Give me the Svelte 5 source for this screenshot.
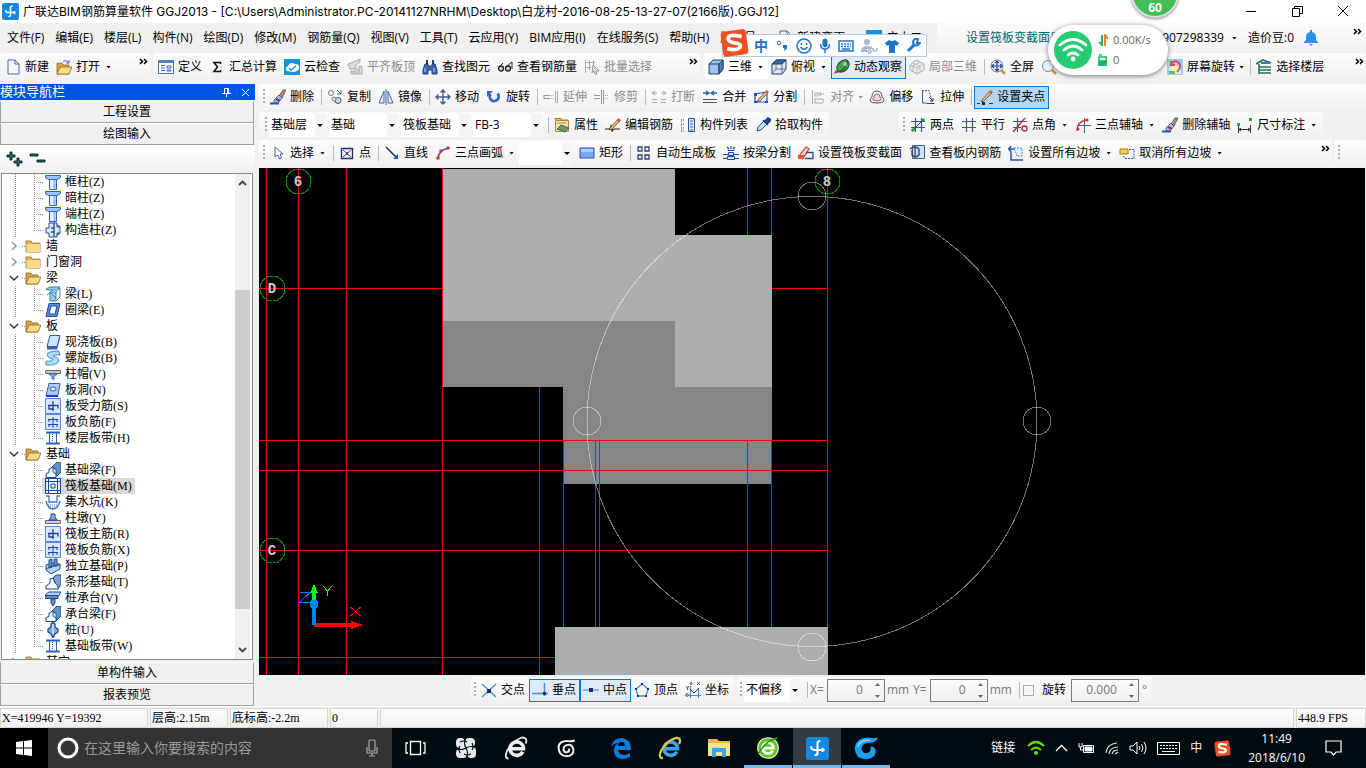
<script lang="ts">
  interface Tool {
    icon?: string
    label?: string
    caret?: boolean
    tight?: boolean
    on?: boolean
    strong?: boolean
    off?: boolean
    plain?: boolean
    sep?: boolean
  }

  interface Node {
    label: string
    icon?: string
    level: number
    open?: boolean
    last?: boolean
    selected?: boolean
  }

  const sep: Tool = { sep: true }

  const pillar = '<path d="M.5 1.500h15v2l-3 2h-9l-3-2z" fill="#9dc3f5" stroke="#2a5fc4"/><path d="M4.500 5.500h7v10h-7z" fill="#e6f0fe" stroke="#2a5fc4"/><path d="M9.500 6v9" stroke="#8fb4ee" stroke-width="2"/>'
  const bars = '<path d="M.5.500h15v15H.5z" fill="#d8e6fb" stroke="#5585dc"/>'
  const beam = '<path d="M6 6l6-6h4v10l-5 5V7z" fill="#5f93c4" stroke="#1c4c8c"/><path d="M1 15.500v-4l3-1V7l4-2v5l3 2v3.500z" fill="#f5faff" stroke="#1c4c8c"/>'
  const strip = '<path d="M1 2.500h14M1 13.500h14" stroke="#2a5fc4" stroke-width="2"/><path d="M4.500 3v10M11.500 3v10" stroke="#2a5fc4"/><path d="M7.500 4v8" stroke="#2a5fc4" stroke-dasharray="1 1"/>'
  const pencil = '<path d="M5 11l8-9 2 2-8 8-3 1z" fill="#e8b973" stroke="#5a4a3a" stroke-width=".8"/><path d="M12 3l1.500-2 2.500 2-2 2z" fill="#d85a4a"/>'
  const brush = '<path d="M9 7l4-6h3l-4 8z" fill="#d9823c" stroke="#2c4f86" stroke-width=".8"/><path d="M4 11l5-5 3 3-4 5H4z" fill="#9ebdf0" stroke="#2c4f86" stroke-width=".8"/><path d="M6 10l4 2" stroke="#b0243a" stroke-width="2"/><path d="M0 14.500h9" stroke="#2456b0" stroke-width="2"/>'
  const cube = '<path d="M1 5l4-4h10v9l-4 5H1z" fill="#9cc4ee" stroke="#223c5c"/><path d="M1 5h10v10M11 5l4-4" fill="none" stroke="#223c5c"/><path d="M11 5l4-4v9l-4 5z" fill="#4f7db0" stroke="#223c5c"/>'
  const folder = '<path d="M1 3h5l1 2h8v9H1z" fill="#e9b949" stroke="#8a6a2a" stroke-width=".8"/><path d="M1.500 6h13.500v8H1.500z" fill="#fbdc85"/>'
  const folderOpen = '<path d="M1 3h5l1 2h6v9H1z" fill="#d9a93d" stroke="#8a6a2a" stroke-width=".8"/><path d="M4 7h12l-3 7H1z" fill="#fbdc85" stroke="#8a6a2a" stroke-width=".8"/>'
  const axes = '<path d="M5.500 1v14M11.500 1v14M1 4.500h14M1 10.500h14" stroke="#3d5a96" stroke-width="1.200"/>'

  const icons: Record<string, string> = {
    newFile: '<path d="M3 1h7l4 4v10H3z" fill="#f4f8fd" stroke="#456a9c"/><path d="M10 1v4h4" fill="none" stroke="#456a9c"/>',
    open: '<path d="M1 4h5l1 2h6v9H1z" fill="#dba638" stroke="#8a6a2a" stroke-width=".8"/><path d="M4 8h12l-3 7H1z" fill="#fbdc85" stroke="#8a6a2a" stroke-width=".8"/><path d="M7 3q4-3 6 1m0-3v3h-3" fill="none" stroke="#3b6cb5"/>',
    define: '<path d="M.5 1.500h15v13H.5z" fill="#f8fbff" stroke="#3f6fae"/><path d="M.5 2.500h15" stroke="#4c83cc" stroke-width="3"/><path d="M3 6.500h4M3 9h4M3 11.500h4M9 7h4v2H9zM9 11h4v1H9z" stroke="#3f6fae"/>',
    sigma: '<path d="M11.500 5V3.500H5L8.500 8 5 12.500h6.500V11" fill="none" stroke="#111" stroke-width="1.600"/>',
    cloud: '<path d="M0 0h16v16H0z" fill="#1296db"/><path d="M3 12q-3-3 1-5 2-5 7-2 5 0 4 5-2 3-5 3z" fill="#fff"/><path d="M5 9l2 2 5-4" stroke="#1296db" stroke-width="1.500" fill="none"/>',
    align: '<path d="M1 5l8-3 4-2v3l-4 3v3l-6 1zM4 12h3v3H4zM8 10h3v5H8zM12 7h3v8h-3z" fill="#ddd" stroke="#aaa"/>',
    find: '<path d="M3 5h3v2h4V5h3l2 6v4h-5v-4H6v4H1v-4z" fill="#3c67ae" stroke="#1d3d78"/><path d="M4 1h2v4H4zM10 1h2v4h-2z" fill="#1d3d78"/><path d="M3 9v4M12 9v4" stroke="#bcd3f5"/>',
    glasses: '<path d="M3 7l3-3M10 7l5-4v7" fill="none" stroke="#222"/><circle cx="4" cy="9.500" r="2.500" fill="#c9d4e2" stroke="#222" stroke-width="1.300"/><circle cx="11" cy="9.500" r="2.500" fill="#c9d4e2" stroke="#222" stroke-width="1.300"/>',
    batch: '<path d="M1.500 1v13M1 3.500h10M5.500 1v10M9.500 1v8M1 8.500h6" fill="none" stroke="#aaa"/><path d="M9 6l6 6h-3l1 3h-2l-1-3-2 2z" fill="#ddd" stroke="#999"/>',
    cube,
    topView: '<path d="M1 5l4-4h10v9l-4 5H1z" fill="#dcecfb" stroke="#223c5c"/><path d="M5 1h10l-4 4H1z" fill="#2f6fae" stroke="#223c5c"/><path d="M11 5v10M5 1v9l-4 5M5 10h10" fill="none" stroke="#557" stroke-width=".8"/>',
    orbit: '<ellipse cx="9" cy="7" rx="5" ry="7" transform="rotate(45 9 7)" fill="#43a845" stroke="#39454a" stroke-width="1.200"/><path d="M1 13q9 1 13-11" fill="none" stroke="#39454a" stroke-width="1.300"/><circle cx="11" cy="5" r="2" fill="#8fe08a"/><path d="M0 15l5-2-3-2z" fill="#c0392b"/>',
    partial: '<path d="M1 6l6-5 8 4v6l-7 4-7-4z" fill="#eee" stroke="#aaa"/><path d="M1 6l7 3 7-4M8 9v6M4 4l7 3v6M11 3L4 7v6" fill="none" stroke="#bbb"/>',
    fit: '<circle cx="7" cy="7" r="6" fill="#eaf3fd" stroke="#6b7785"/><path d="M7 2v10M2 7h10M5 4l2-2 2 2M5 10l2 2 2-2M4 5L2 7l2 2M10 5l2 2-2 2" fill="none" stroke="#234b8f" stroke-width="1.200"/><path d="M11 11l4 4" stroke="#c99240" stroke-width="2.500"/>',
    zoom: '<circle cx="7" cy="7" r="5.500" fill="#eaf3fd" stroke="#7c8896"/><path d="M11 11l4 4" stroke="#c99240" stroke-width="2.500"/>',
    rotateScreen: '<path d="M0 0h16v16H0z" fill="#8fd0f5"/><path d="M2 9l6-4 6 5v5H2z" fill="#f5f0c4"/><path d="M4 5q4-5 8-1 3 4-2 9M4 2v4h4" fill="none" stroke="#e2444a" stroke-width="1.800"/><path d="M2 12h6v3H2z" fill="#7cb83f"/>',
    floors: '<path d="M0 5l7-4 8 3M3 8h12M3 11h12M3 14h12M3 5v10" fill="none" stroke="#2b6f5a" stroke-width="1.600"/><path d="M5 4h9" stroke="#3c78c4" stroke-width="2"/>',
    brush,
    copy: '<circle cx="4" cy="4" r="2.500" fill="#f4f8ff" stroke="#69788f"/><circle cx="11" cy="11.500" r="3" fill="#cde" stroke="#3d567e"/><circle cx="7" cy="10" r="2" fill="#eef" stroke="#69788f"/><path d="M10 1l4 4M14 1v4h-4" fill="none" stroke="#3c5f9c"/>',
    mirror: '<path d="M6 2v12H1zM10 2v12h5z" fill="#e6eefb" stroke="#3a66b0"/><path d="M8 0v16" stroke="#3a66b0"/>',
    move: '<path d="M8 1v14M1 8h14M5.500 3.500L8 1l2.500 2.500M5.500 12.500L8 15l2.500-2.500M3.500 5.500L1 8l2.500 2.500M12.500 5.500L15 8l-2.500 2.500" fill="none" stroke="#3e5f8a" stroke-width="1.400"/>',
    rotate: '<path d="M4.500 5a4.500 4.500 0 1 0 7-.500" fill="none" stroke="#3465c4" stroke-width="2.800"/><path d="M7 2H1v6z" fill="#3465c4"/>',
    extend: '<path d="M1 6.500h6M1 9.500h6M1 6v4" stroke="#999"/><path d="M8 6.500h3M8 9.500h3" stroke="#aaa" stroke-dasharray="1 1"/><path d="M12.500 2v12M14.500 2v12" stroke="#aaa"/>',
    trim: '<path d="M0 6.500h6M0 9.500h6M7.500 1v14M9.500 1v14" stroke="#999"/><path d="M11 6.500h4M11 9.500h4" stroke="#aaa" stroke-dasharray="1 1"/>',
    breakLine: '<path d="M1 4h5M4 2l-3 2 3 2M10 4h5M12 2l3 2-3 2M1 10.500h5M10 10.500h5M1 13.500h5M10 13.500h5" fill="none" stroke="#aaa"/>',
    merge: '<path d="M1 4h5M4 2l3 2-3 2M10 4h5M12 2L9 4l3 2" fill="none" stroke="#2c5daf" stroke-width="1.300"/><path d="M1 10.500h14M1 13.500h14" stroke="#555"/>',
    split: '<path d="M2 13V5l12-2v10z" fill="none" stroke="#2450c8" stroke-width="1.200"/>' + pencil + '<path d="M1 4h3v3H1zM1 12h3v2H1zM12 12h3v2h-3z" fill="#2450c8"/>',
    alignTo: '<path d="M2.500 1v14M5 4h3v3H5zM5 10h8v4H5z" fill="none" stroke="#aaa"/><path d="M14 5H9l2-2M9 5l2 2" fill="none" stroke="#aaa"/>',
    offset: '<path d="M1 12q0-3 2-4 0-6 5-6t5 6q2 1 2 4-1 2-7 2t-7-2z" fill="#eef2f9" stroke="#3a5585"/><path d="M4 11q0-2 1-3 0-3 3-3t3 3q1 1 1 3-4 2-8 0z" fill="#f5d8d8" stroke="#c85050"/>',
    stretch: '<path d="M2.500 1v13h4" fill="none" stroke="#3c62a8"/><path d="M2 1.500h7l3 12" fill="none" stroke="#3c62a8" stroke-dasharray="2 1"/><path d="M6.500 14.500h8M9 8l4 4v-3m0 3h-3" fill="none" stroke="#33415c"/>',
    grip: pencil + '<path d="M0 14.500h3M12 14.500h4" stroke="#333"/><path d="M5 13h3v3H5z" fill="#222"/>',
    props: '<path d="M1 3V1.500h6l1 1.500h6v2" fill="#f0c060" stroke="#a77c22"/><path d="M1.500 3.500h13v11h-13z" fill="#fbe3ac" stroke="#b8863a"/><path d="M3 12l4-4 8 3-4 4z" fill="#6f9a5c" stroke="#46617c"/><path d="M3 6h9" stroke="#c88a2c"/>',
    editBar: '<path d="M0 12h5l1-3 1 5 2-2h6" fill="none" stroke="#222" stroke-width="1.200"/>' + pencil,
    list: '<path d="M1 3h4M1 7h4M1 11h4M1 14h4" stroke="#445" stroke-dasharray="1 1"/><path d="M1.500 2v13" stroke="#688" stroke-dasharray="1 1"/><path d="M8.500 1.500h6v13h-6z" fill="#dce8fb" stroke="#2f4f8c"/><path d="M10 4h3M10 7h3M10 10h3M10 13h3" stroke="#2f6fd0"/>',
    picker: '<path d="M2 14l1-4 6-6 3 3-6 6z" fill="#bcdcf7" stroke="#28558f"/><path d="M8 3l5 5M10 4l3-3 3 2-4 4z" fill="#1d4f9c" stroke="#12386f" stroke-width="1.500"/>',
    twoPoint: axes + '<path d="M2 14L14 2" stroke="#2d2d2d"/><circle cx="3" cy="13" r="1.800" fill="#2f9a3b"/><circle cx="13" cy="3" r="1.800" fill="#2f9a3b"/>',
    parallel: axes,
    angle: '<path d="M5.500 1v14M1 4.500h14M1 10.500h8" stroke="#3d5a96" stroke-width="1.200"/><path d="M1 15L13 1" stroke="#c2202f" stroke-width="1.300"/><circle cx="12.500" cy="11.500" r="2.500" fill="#fff" stroke="#c2202f" stroke-width="1.300"/>',
    threeAxis: '<path d="M9.500 1v15M3 8.500h13" stroke="#3d5a96"/><path d="M2 14Q2 4 12 3" fill="none" stroke="#c2302f" stroke-width="1.300"/><circle cx="3" cy="12" r="1.500" fill="#c2302f"/><circle cx="12" cy="3" r="1.500" fill="#c2302f"/>',
    dims: '<path d="M1.500 8v8M13.500 8v8M2 12.500h11M4 11l-2 1.500L4 14M11 11l2 1.500L11 14" fill="none" stroke="#333"/><path d="M0 6h3v3H0zM12 1h3v3h-3z" fill="#2fa33b"/>',
    pointer: '<path d="M5 2v10l3-2 1.500 4 2-1L10 9h3z" fill="#fff" stroke="#4a6694"/>',
    point: '<path d="M2.500 3.500h11v10h-11z" fill="#f2f6ff" stroke="#222c6c" stroke-width="1.300"/><path d="M4 5l8 7M12 5l-8 7" stroke="#2450b8"/><path d="M7 7h2v3H7z" fill="#c02030"/>',
    line: '<path d="M2 2l11 11" stroke="#1d2b50" stroke-width="1.500"/><path d="M14 14H9l5-5z" fill="#1f4fc4"/>',
    arc: '<path d="M3 14Q3 5 14 3" fill="none" stroke="#2a4c9c" stroke-width="1.300"/><circle cx="3" cy="13" r="1.800" fill="#c8402f"/><circle cx="6" cy="6" r="1.800" fill="#c8402f"/><circle cx="13" cy="3" r="1.800" fill="#c8402f"/>',
    rect: '<path d="M1 3h14v10H1z" fill="#7ba8f0" stroke="#2c55b8"/><path d="M2 4h12v3H2z" fill="#b4cff8"/>',
    auto: '<path d="M2 2h4v4H2zM9 2h4v4H9zM2 10h4v4H2zM9 10h4v4H9z" fill="#f4f8ff" stroke="#2c3f6c" stroke-width="1.300"/>',
    byBeam: '<path d="M5.500 7.500h5v3h-5zM4.500 11.500h7v3h-7z" fill="#cfe0fb" stroke="#234a9c"/><path d="M0 9.500h5M11 9.500h5M0 13.500h4M12 13.500h4M8 1v3M4 2l2 2M12 2l-2 2M4.500 5.500h7" stroke="#234a9c" stroke-width="1.200"/>',
    section: '<path d="M1 11l7-9 3 2-5 8z" fill="#f8d0c4" stroke="#d23e2f" stroke-width="1.200"/><path d="M0 10h6v4H0z" fill="#e2583f"/><path d="M8 7.500h7v6H7" fill="none" stroke="#284d9c" stroke-width="1.300"/>',
    viewBar: '<path d="M3.500.500h12v13h-12z" fill="#cfe0f5" stroke="#3c5f9c"/><path d="M1 4q5-4 9 0v6q-4 4-7 0V5M6 2v10" fill="none" stroke="#33435c" stroke-width="1.300"/>',
    slope: '<path d="M0 4h6M3 1L1 4l2 3v8h12" fill="none" stroke="#2456b8" stroke-width="1.500"/><path d="M6 3h8v8H9z" fill="#e3edfb" stroke="#5f86cc" stroke-dasharray="2 1"/>',
    noSlope: '<path d="M1 4h8v5H1z" fill="#f2cf4f" stroke="#9a7a22"/><path d="M10 4.500h5v9H6l-2-3" fill="none" stroke="#2456b8" stroke-dasharray="2 1"/>',
    cross: '<path d="M1 2l14 13M15 2L1 15" stroke="#4c8bd0" stroke-width="1.300"/><path d="M6 7h4v4H6z" fill="#12326c"/>',
    perp: '<path d="M0 11.500h16M12.500 1v13" stroke="#4c8bd0" stroke-width="1.500"/><path d="M11 10h3v3h-3z" fill="#12326c"/>',
    mid: '<path d="M0 8h16" stroke="#6f9fd8" stroke-width="1.500"/><path d="M6 6h4v4H6z" fill="#12326c"/>',
    vertex: '<path d="M8 2l6 5-2 7H4L2 7z" fill="none" stroke="#4c8bd0" stroke-width="1.300"/><path d="M7 1h2v2H7zM1 6h2v2H1zM13 6h2v2h-2zM3 13h2v2H3zM11 13h2v2h-2z" fill="#12326c"/>',
    coord: '<path d="M5.500 4v12M3 13.500h13M13.500 6v10" stroke="#4c8bd0" stroke-width="1.200"/><path d="M5 7l4 4 5-5" fill="none" stroke="#12326c"/><path d="M1 4l1.500 2L4 4M2.500 6v2M12 0l3 3M15 0l-3 3" stroke="#333" stroke-width=".8"/><circle cx="6" cy="1.500" r="1" stroke="#333" stroke-width=".8"/><circle cx="2" cy="13" r="1.300" stroke="#333" stroke-width=".8"/>',
    pillar,
    tied: '<path d="M4 1h8v4h3v6h-3v4H4v-4H1V6h3z" fill="#dbe9fc" stroke="#2a4f94"/><path d="M9 1v14M6 6h3M6 10h3M12 3l3 2M12 13l3-2" stroke="#2a4f94" stroke-width="1.400"/>',
    beamL: '<path d="M1 3l4-2h10l-4 3H2zM5 6h6v9H5z" fill="#8fd0f2" stroke="#3d82b5"/><path d="M11 6l4-4v9l-4 4M5 6l6 6M2 9l6-5" fill="none" stroke="#3d82b5"/>',
    ring: '<path d="M4 1.500h11l-3 13H1z" fill="#5f8ee0" stroke="#1d459c"/><path d="M6 4h6l-2 8H4z" fill="#fff" stroke="#1d459c"/>',
    slab: '<path d="M5 1.500h10l-3 11H2z" fill="#cfe2fb" stroke="#2a5fc4"/><path d="M2 12.500h10l3-10v2l-3 11H2z" fill="#2a5fc4"/>',
    spiral: '<path d="M14 1Q2 1 2 5q1 3 6 4Q7 12 1 11v4q12 1 13-5-1-3-6-4 2-2 7-1z" fill="#a8dcf5" stroke="#3a94c4"/>',
    cap: '<path d="M.5 4.500h15v3H.5z" fill="#c8c8c8" stroke="#666"/><path d="M4 8h8l-3 2v3H7v-3z" fill="#9fc2f5" stroke="#2a5fc4"/>',
    hole: '<path d="M4 1.500h11l-2 12H1z" fill="#a9c8f7" stroke="#2a5fc4"/><ellipse cx="8" cy="7" rx="3" ry="2" fill="#e8f1fd" stroke="#2a5fc4"/><path d="M1 14h12" stroke="#1d459c" stroke-width="2"/>',
    mainBar: bars + '<path d="M3 7.500h10v3M8 3v10M4 7v4h5" fill="none" stroke="#1d459c" stroke-width="1.300"/>',
    negBar: bars + '<path d="M3 5.500h10M3 10.500h10M8 3v11M4 5v3M12 5v3M4 10v3M12 10v3" fill="none" stroke="#1d459c"/>',
    strip,
    beam,
    raft: '<path d="M.5.500h15v15H.5z" fill="#eaf1fc" stroke="#1d459c"/><path d="M3.500 1v14M12.500 1v14M1 3.500h14M1 12.500h14M6 6h4v4H6z" fill="none" stroke="#1d459c"/>',
    pit: '<path d="M1 2h3v6h8V2h3M1 7q2 8 7 8t7-8" fill="none" stroke="#3a78c4" stroke-width="1.300"/><path d="M3 11h10M5 13h6" stroke="#3a78c4" stroke-dasharray="1 1"/>',
    pier: '<path d="M.5 10.500h15v3H.5z" fill="#d2d2d2" stroke="#666"/><path d="M4 10l2-3V4h4v3l2 3z" fill="#7fa8ea" stroke="#1d459c"/>',
    isolated: '<path d="M1 7l5-2 9 1v5l-9 5-5-4z" fill="#b7d0ee" stroke="#1c4c8c"/><path d="M4 2l3-1v8l-3 1zM9 1h3v7H9zM1 11l6-3 8-1" fill="#5f93c4" stroke="#1c4c8c"/>',
    stripBase: '<path d="M8 4l3-3h5v9l-3 5z" fill="#78a6cf" stroke="#1c4c8c"/><path d="M1 15v-3l4-3V5l3-1 2 5 3 3v3z" fill="#f1f7fe" stroke="#1c4c8c"/>',
    pileCap: '<path d="M0 5l4-3h12l-3 5H0z" fill="#b7d0ee" stroke="#1c4c8c"/><path d="M0 5.500h13v3H0zM6 9h4v4l-2 3-2-3z" fill="#5f93c4" stroke="#1c4c8c"/>',
    pile: '<path d="M6 2l2-2 2 2v3l3 2v3l-3 2-2 4-2-4-3-2V7l3-2z" fill="#7fa8da" stroke="#1c4c8c" stroke-width="1.300"/><path d="M8 2v10" stroke="#fff"/>',
    folder,
    folderOpen,
    app: '<rect width="16" height="16" rx="2" fill="#1488e0"/><path d="M8 12V4.500Q8 2.500 10 3M3.500 6.500q0 2.500 2.500 2.500h7M11.500 7.500v3M8 11q0 2-2 1.500" fill="none" stroke="#fff" stroke-width="1.400"/>',
    sogou: '<rect x="1" y="1" width="14" height="14" rx="2" transform="rotate(-8 8 8)" fill="#f04e23"/><path d="M12 4.500Q4 2.500 4.500 6q.5 1.500 4 2t2.500 2.500Q9 12.500 4 11" fill="none" stroke="#fff" stroke-width="2"/>',
    ie: '<path d="M12.500 10.500A4.500 4.500 0 1 1 13 8.500H5" fill="none" stroke="currentColor" stroke-width="2.400"/><path d="M3 15Q0 15 2 10 6 3 12 1q4 0 2.500 4" fill="none" stroke="currentColor" stroke-width="1.200"/>',
    ieBall: '<circle cx="8" cy="8" r="7.500" fill="#5fc426" stroke="#e8f8de" stroke-width=".8"/><path d="M11.500 10A4 4 0 1 1 12 8H4.500" fill="none" stroke="#fff" stroke-width="2"/><path d="M1 12Q8 1 15 1" fill="none" stroke="#2d9a17" stroke-width="1.200"/>',
    swirl: '<path d="M15 2Q12 3 10 2.500 3 2 2 7q0 7 6 7.500 6 0 6-5Q13 5 9.500 5.500 6 6 6 9q0 2.500 2.500 2.500Q11 11 10.500 8.500" fill="none" stroke="currentColor" stroke-width="1.600"/>',
    gswirl: '<path d="M16 1q-3 1-6 0Q1 1 .5 8.500 1 15.500 8 15.500q6-.5 6.500-5Q14.500 7 11 7q1 4-3 4.500-3-.5-3-3.500 1-3.500 5-3.500Q15 4.500 16 1z" fill="#1ba2f5"/><path d="M2.500 7q2-5 8-4" stroke="#8fdcff" fill="none"/>'
  }

  const menus = ['文件(F)', '编辑(E)', '楼层(L)', '构件(N)', '绘图(D)', '修改(M)', '钢筋量(Q)', '视图(V)', '工具(T)', '云应用(Y)', 'BIM应用(I)', '在线服务(S)', '帮助(H)', '版本号']

  const fileTools: Tool[] = [
    { icon: 'newFile', label: '新建' },
    { icon: 'open', label: '打开', caret: true }
  ]
  const calcTools: Tool[] = [
    { icon: 'define', label: '定义' },
    { icon: 'sigma', label: '汇总计算' },
    { icon: 'cloud', label: '云检查' },
    { icon: 'align', label: '平齐板顶', off: true },
    { icon: 'find', label: '查找图元' },
    { icon: 'glasses', label: '查看钢筋量' },
    { icon: 'batch', label: '批量选择', off: true }
  ]
  const viewTools: Tool[] = [
    { icon: 'cube', label: '三维', caret: true, plain: true },
    { icon: 'topView', label: '俯视', caret: true },
    { icon: 'orbit', label: '动态观察', on: true },
    { icon: 'partial', label: '局部三维', off: true },
    sep,
    { icon: 'fit', label: '全屏' },
    { icon: 'zoom', label: '缩放', caret: true },
    { icon: 'move', label: '平移', caret: true },
    { icon: 'rotateScreen', label: '屏幕旋转', caret: true, tight: true },
    sep,
    { icon: 'floors', label: '选择楼层' }
  ]
  const editTools: Tool[] = [
    { icon: 'brush', label: '删除' },
    sep,
    { icon: 'copy', label: '复制' },
    { icon: 'mirror', label: '镜像' },
    sep,
    { icon: 'move', label: '移动' },
    { icon: 'rotate', label: '旋转' },
    sep,
    { icon: 'extend', label: '延伸', off: true },
    { icon: 'trim', label: '修剪', off: true },
    sep,
    { icon: 'breakLine', label: '打断', off: true },
    { icon: 'merge', label: '合并' },
    { icon: 'split', label: '分割' },
    sep,
    { icon: 'alignTo', label: '对齐', off: true, caret: true, tight: true },
    { icon: 'offset', label: '偏移' },
    { icon: 'stretch', label: '拉伸' },
    sep,
    { icon: 'grip', label: '设置夹点', on: true, strong: true }
  ]
  const partTools: Tool[] = [
    { icon: 'props', label: '属性' },
    { icon: 'editBar', label: '编辑钢筋' },
    { icon: 'list', label: '构件列表' },
    { icon: 'picker', label: '拾取构件' }
  ]
  const axisTools: Tool[] = [
    { icon: 'twoPoint', label: '两点' },
    { icon: 'parallel', label: '平行' },
    { icon: 'angle', label: '点角', caret: true },
    { icon: 'threeAxis', label: '三点辅轴', caret: true },
    { icon: 'brush', label: '删除辅轴' },
    { icon: 'dims', label: '尺寸标注', caret: true }
  ]
  const drawTools: Tool[] = [
    { icon: 'pointer', label: '选择', caret: true },
    sep,
    { icon: 'point', label: '点' },
    sep,
    { icon: 'line', label: '直线' },
    { icon: 'arc', label: '三点画弧', caret: true }
  ]
  const slabTools: Tool[] = [
    { icon: 'rect', label: '矩形' },
    sep,
    { icon: 'auto', label: '自动生成板' },
    { icon: 'byBeam', label: '按梁分割' },
    { icon: 'section', label: '设置筏板变截面' },
    { icon: 'viewBar', label: '查看板内钢筋' },
    { icon: 'slope', label: '设置所有边坡', caret: true },
    { icon: 'noSlope', label: '取消所有边坡', caret: true }
  ]
  const snapTools: Tool[] = [
    { icon: 'cross', label: '交点' },
    { icon: 'perp', label: '垂点', on: true },
    { icon: 'mid', label: '中点', on: true },
    { icon: 'vertex', label: '顶点' },
    { icon: 'coord', label: '坐标' }
  ]

  const tree: Node[] = [
    { label: '框柱(Z)', icon: 'pillar', level: 2 },
    { label: '暗柱(Z)', icon: 'pillar', level: 2 },
    { label: '端柱(Z)', icon: 'pillar', level: 2 },
    { label: '构造柱(Z)', icon: 'tied', level: 2, last: true },
    { label: '墙', level: 1 },
    { label: '门窗洞', level: 1 },
    { label: '梁', level: 1, open: true },
    { label: '梁(L)', icon: 'beamL', level: 2 },
    { label: '圈梁(E)', icon: 'ring', level: 2, last: true },
    { label: '板', level: 1, open: true },
    { label: '现浇板(B)', icon: 'slab', level: 2 },
    { label: '螺旋板(B)', icon: 'spiral', level: 2 },
    { label: '柱帽(V)', icon: 'cap', level: 2 },
    { label: '板洞(N)', icon: 'hole', level: 2 },
    { label: '板受力筋(S)', icon: 'mainBar', level: 2 },
    { label: '板负筋(F)', icon: 'negBar', level: 2 },
    { label: '楼层板带(H)', icon: 'strip', level: 2, last: true },
    { label: '基础', level: 1, open: true },
    { label: '基础梁(F)', icon: 'beam', level: 2 },
    { label: '筏板基础(M)', icon: 'raft', level: 2, selected: true },
    { label: '集水坑(K)', icon: 'pit', level: 2 },
    { label: '柱墩(Y)', icon: 'pier', level: 2 },
    { label: '筏板主筋(R)', icon: 'mainBar', level: 2 },
    { label: '筏板负筋(X)', icon: 'negBar', level: 2 },
    { label: '独立基础(P)', icon: 'isolated', level: 2 },
    { label: '条形基础(T)', icon: 'stripBase', level: 2 },
    { label: '桩承台(V)', icon: 'pileCap', level: 2 },
    { label: '承台梁(F)', icon: 'beam', level: 2 },
    { label: '桩(U)', icon: 'pile', level: 2 },
    { label: '基础板带(W)', icon: 'strip', level: 2, last: true },
    { label: '其它', level: 1 }
  ]

  // grid lines: [x, y1, y2] and [y, x1, x2]
  const vLines = [
    [266, 168, 675], [298, 168, 675], [346, 168, 675], [442, 168, 675], [539, 387, 675],
    [563, 440, 627], [595, 440, 627], [599, 440, 627], [747, 168, 235], [747, 440, 627],
    [771, 168, 235], [771, 440, 627], [827, 168, 627]
  ]
  const hLines = [
    [288, 259, 443], [288, 772, 828], [440, 259, 828], [470, 259, 828], [550, 259, 828], [657, 259, 555]
  ]
  const bubbles = [
    { x: 298, y: 181, t: '6' },
    { x: 827, y: 181, t: '8' },
    { x: 272, y: 288, t: 'D' },
    { x: 272, y: 550, t: 'C' }
  ]
  const handles = [[812, 196], [587, 421], [1037, 421], [812, 647]]
</script>

{#snippet icon(name: string, size = 16)}
  <svg class="icon" width={size} height={size} viewBox="0 0 16 16" fill="none" aria-hidden="true">{@html icons[name]}</svg>
{/snippet}

{#snippet toolList(items: Tool[])}
  {#each items as t}
    {#if t.sep}
      <i class="sep"></i>
    {:else}
      <button class="tool" class:on={t.on} class:strong={t.strong} class:plain={t.plain} disabled={t.off}>
        {@render icon(t.icon ?? '')}
        <span>{t.label}</span>
        {#if t.caret}<i class="caret" class:tight={t.tight}></i>{/if}
      </button>
    {/if}
  {/each}
{/snippet}

{#snippet more()}
  <svg class="more" width="9" height="7" viewBox="0 0 9 7" fill="none" stroke="#000" stroke-width="1.500"><path d="M1 1l2.500 2.500L1 6M5 1l2.500 2.500L5 6" /></svg>
{/snippet}

{#snippet combo(label: string, value: string, kind: string)}
  <span class="combo {kind}">
    <select aria-label={label}><option>{value}</option></select>
  </span>
{/snippet}

{#snippet spin(label: string, value: string, kind: string)}
  <span class="spin {kind}">
    <input type="text" aria-label={label} {value} />
    <svg width="5" height="15" viewBox="0 0 5 15" fill="#666"><path d="M0 3l2.500-3L5 3zM0 12l2.500 3L5 12z" /></svg>
  </span>
{/snippet}

<div class="window">
  <header class="title">
    {@render icon('app', 17)}
    <h1>广联达BIM钢筋算量软件 GGJ2013 - [C:\Users\Administrator.PC-20141127NRHM\Desktop\白龙村-2016-08-25-13-27-07(2166版).GGJ12]</h1>
    <div class="controls">
      <button aria-label="最小化"><svg width="11" height="11" stroke="#000"><path d="M0 5.500h10" /></svg></button>
      <button aria-label="还原"><svg width="11" height="11" stroke="#000" fill="none"><path d="M.5 2.500h7v8h-7zM2.500 2.500v-2h8v7h-3" /></svg></button>
      <button aria-label="关闭"><svg width="11" height="11" stroke="#000"><path d="M0 0l10 10M10 0L0 10" /></svg></button>
    </div>
  </header>

  <nav class="menubar">
    <div class="menus">
      {#each menus as m}<button>{m}</button>{/each}
      <button class="with-icon">{@render icon('newFile')} 新建变更</button>
      <button class="with-icon">{@render icon('cloud')} 广小二</button>
    </div>
    <div class="account group">
      <a href="#help">设置筏板变截面后</a>
      <button class="user">907298339<i class="caret"></i></button>
      <span>造价豆:0</span>
      <svg width="14" height="16" viewBox="0 0 14 16" fill="#2f8df0"><path d="M6 0h2v2q4 1 4 5v3l2 2v1H0v-1l2-2V7q0-4 4-5zM5 14h4l-2 2z" /></svg>
      {@render more()}
    </div>
  </nav>

  <div class="bar">
    <div class="group file">{@render toolList(fileTools)}{@render more()}</div>
    <div class="group calc">{@render toolList(calcTools)}{@render more()}</div>
    <div class="group grow">{@render toolList(viewTools)}{@render more()}</div>
  </div>

  <div class="body">
    <aside>
      <div class="dock-title">
        <h2>模块导航栏</h2>
        <button aria-label="固定"><svg width="9" height="9" stroke="#fff" fill="none"><path d="M2.500 5V.5h4V5M5.500 1v4M0 5.500h9M4.500 6v3" /></svg></button>
        <button aria-label="关闭"><svg width="9" height="9" stroke="#fff"><path d="M1 1l7 7M8 1L1 8" /></svg></button>
      </div>
      <button class="nav">工程设置</button>
      <button class="nav">绘图输入</button>
      <div class="expand">
        <button aria-label="全部展开"><svg width="17" height="16" fill="#0a8a80" stroke="#000" stroke-width=".8"><path d="M4 1h2v3h3v2H6v3H4V6H1V4h3zM11 7h2v3h3v2h-3v3h-2v-3H8v-2h3z" /></svg></button>
        <button aria-label="全部折叠"><svg width="17" height="16" fill="#0a8a80" stroke="#000" stroke-width=".8"><path d="M1 3h8v2H1zM8 9h8v2H8z" /></svg></button>
      </div>
      <div class="tree">
        <ul>
          {#each tree as n}
            <li class="level{n.level}" class:last={n.last}>
              {#if n.level === 1}
                <svg class="arrow" width="10" height="10" fill="none" stroke={n.open ? '#333' : '#999'} stroke-width="1.500"><path d={n.open ? 'M1 3l4 4 4-4' : 'M3 1l4 4-4 4'} /></svg>
                <i class="twig"></i>
                {@render icon(n.open ? 'folderOpen' : 'folder')}
              {/if}
              <span class="leaf" class:selected={n.selected}>
                {#if n.icon}{@render icon(n.icon)}{/if}
                <span>{n.label}</span>
              </span>
            </li>
          {/each}
        </ul>
        <div class="scroll">
          <svg width="9" height="6" fill="none" stroke="#444" stroke-width="1.800"><path d="M1 5l3.500-3.500L8 5" /></svg>
          <i class="above"></i>
          <i class="thumb"></i>
          <i class="below"></i>
          <svg width="9" height="6" fill="none" stroke="#444" stroke-width="1.800"><path d="M1 1l3.500 3.500L8 1" /></svg>
        </div>
      </div>
      <button class="nav">单构件输入</button>
      <button class="nav">报表预览</button>
    </aside>

    <main>
      <div class="row">
        <div class="group grow"><i class="handle"></i>{@render toolList(editTools)}</div>
      </div>
      <div class="row">
        <div class="group parts">
          <i class="handle"></i>
          {@render combo('楼层', '基础层', 'short')}
          {@render combo('构件类型', '基础', 'long')}
          {@render combo('构件', '筏板基础', 'long')}
          {@render combo('名称', 'FB-3', 'long')}
          <i class="sep"></i>
          {@render toolList(partTools)}
        </div>
        <div class="group axis"><i class="handle"></i>{@render toolList(axisTools)}</div>
      </div>
      <div class="row">
        <div class="group grow">
          <i class="handle"></i>
          {@render toolList(drawTools)}
          {@render combo('画法', '', 'tiny')}
          {@render toolList(slabTools)}
          {@render more()}
        </div>
        <div class="group tail"><i class="handle"></i></div>
      </div>

      <svg class="canvas" viewBox="259 168 1107 507" preserveAspectRatio="xMinYMin slice" shape-rendering="crispEdges">
        <path d="M443 169h232v66h97v152H443z" fill="#adadad" />
        <path d="M443 321h232v66h97v97H563v-97H443z" fill="#868686" />
        <path d="M555 627h273v50H555z" fill="#adadad" />
        {#each vLines as [x, y1, y2]}<rect {x} y={y1} width="1" height={y2 - y1} fill="#f00" />{/each}
        {#each hLines as [y, x1, x2]}<rect x={x1} {y} width={x2 - x1} height="1" fill="#f00" />{/each}
        {#each bubbles as b}
          <circle cx={b.x + 0.5} cy={b.y + 0.5} r="12.500" fill="none" stroke="#008a00" />
          <text x={b.x} y={b.y + 5} text-anchor="middle">{b.t}</text>
        {/each}
        <g fill="none" stroke="#fff" stroke-opacity=".45">
          <circle cx="812" cy="421.500" r="225" />
          {#each handles as [x, y]}<circle cx={x} cy={y} r="14" />{/each}
        </g>
        <path d="M314 623h37v-2l12 4-12 4v-2h-37z" fill="#f00" />
        <path d="M350.500 607l10 9M360.500 607l-10 9" stroke="#f00" />
        <path d="M314 584l4 9h-2v10h-4V593h-2z" fill="#0f0" />
        <path d="M323 586l4.500 5 4.500-5M327.500 591v5" stroke="#0f0" fill="none" />
        <path d="M312 604h4v21h-4z" fill="#0080ff" />
        <circle cx="314" cy="604" r="4.500" fill="#0080ff" />
        <path d="M300 592.500h10l-10 9.500h10" stroke="#0080ff" fill="none" />
      </svg>

      <div class="snap">
        <div class="group"><i class="handle"></i>{@render toolList(snapTools)}</div>
        <div class="group offset">
          <i class="handle"></i>
          {@render combo('偏移方式', '不偏移', 'short')}
          <i class="sep"></i>
          <span class="dim">X=</span>
          {@render spin('X', '0', 'narrow')}
          <span class="dim unit">mm</span>
          <span class="dim">Y=</span>
          {@render spin('Y', '0', 'narrow')}
          <span class="dim unit">mm</span>
          <i class="sep"></i>
          <label><input type="checkbox" />旋转</label>
          {@render spin('角度', '0.000', 'wide')}
          <span class="dim">°</span>
        </div>
      </div>
    </main>
  </div>

  <footer class="status">
    <span class="coords">X=419946 Y=19392</span>
    <span class="height">层高:2.15m</span>
    <span class="base">底标高:-2.2m</span>
    <span class="count">0</span>
    <span class="grow"></span>
    <span class="fps">448.9 FPS</span>
  </footer>

  <div class="taskbar">
    <button class="start" aria-label="开始"><svg width="16" height="16" fill="#fff"><path d="M0 2l7-1v6.500H0zM8 1l8-1v7.500H8zM0 8.500h7V15l-7-1zM8 8.500h8V16l-8-1z" /></svg></button>
    <div class="search">
      <svg width="22" height="22" fill="none" stroke="#fff" stroke-width="3"><circle cx="11" cy="11" r="9" /></svg>
      <input type="text" placeholder="在这里输入你要搜索的内容" aria-label="搜索" />
      <svg width="12" height="18" fill="none" stroke="#aaa" stroke-width="1.200"><rect x="3" y="1" width="6" height="11" rx="1" /><path d="M1 8v6h10V8M6 14v3M3 17h6" /></svg>
    </div>
    <div class="apps">
      <button aria-label="任务视图"><svg width="22" height="16" fill="none" stroke="#fff" stroke-width="1.300"><path d="M5.500 1.500h10v13h-10zM3 3H1v10h2M18 3h2v10h-2" /></svg></button>
      <button aria-label="风扇"><svg width="22" height="22" viewBox="0 0 22 22" fill="#e8e8e8"><rect x="1" y="1" width="9" height="10" rx="4" /><rect x="10" y="1" width="10" height="9" rx="4" /><rect x="12" y="10" width="9" height="11" rx="4" /><rect x="1" y="12" width="11" height="9" rx="4" /><circle cx="11" cy="11" r="6" /><path d="M11 11Q8 6 11 0M11 11q5-3 11 0M11 11q3 5 0 11M11 11q-5 3-11 0M5 5q4-2 7 0M17 6q2 4 0 7M16 17q-4 2-7 0M5 16q-2-4 0-7" fill="none" stroke="#010b10" stroke-width="1.200" /></svg></button>
      <button class="white" aria-label="浏览器">{@render icon('ie', 24)}</button>
      <button class="white" aria-label="广联达">{@render icon('swirl', 20)}</button>
    </div>
    <div class="apps pinned">
      <button aria-label="Edge"><svg width="20" height="21" viewBox="0 0 20 21" fill="#0f7bd8"><path d="M0 9Q2 0 11 0q9 1 9 12H7q1 5 6 5 3 0 6-2v4q-4 2-8 2-9-1-8-10 1-4 4-6-4 0-7 4zm7-1h7q0-4-3.500-4T7 8z" /></svg></button>
      <button class="sky" aria-label="IE">{@render icon('ie', 24)}<svg class="orbit" width="24" height="24" fill="none" stroke="#f6c12e" stroke-width="2"><path d="M5 22Q-1 22 4 13 10 4 18 2q6 0 3 6" /></svg></button>
      <button aria-label="文件资源管理器"><svg width="22" height="20" viewBox="0 0 22 20"><path d="M0 1h9l2 2h11v15H0z" fill="#e9b64a" /><path d="M0 5h22v13H0z" fill="#fde08d" /><path d="M4 10h14v9h-4v-5H8v5H4z" fill="#3ba7e8" /></svg></button>
      <button class="running" aria-label="安全浏览器">{@render icon('ieBall', 22)}</button>
      <button class="running active" aria-label="GGJ2013">{@render icon('app', 23)}</button>
      <button class="running" aria-label="广联达云">{@render icon('gswirl', 24)}</button>
    </div>
    <div class="tray">
      <span>链接</span>
      <svg width="18" height="16" viewBox="0 0 18 16" fill="none" stroke="#58d80c" stroke-width="2.200"><path d="M1 6q8-8 16 0M4 10q5-5 10 0" /><circle cx="9" cy="13" r="1" /></svg>
      <svg width="13" height="8" fill="none" stroke="#fff" stroke-width="1.300"><path d="M1 7l5.500-5.500L12 7" /></svg>
      <svg width="17" height="12" viewBox="0 0 17 12" fill="none" stroke="#fff"><path d="M5.500 3.500h10v7h-10zM1 1v4h3V1M2.500 5v3h3" /><path d="M7 5h7v4H7z" fill="#fff" /></svg>
      <svg width="14" height="14" viewBox="0 0 14 14" fill="none" stroke="#ddd" stroke-width="1.200"><path d="M1 12Q2 3 12 2M4 13q1-7 9-7M7 13q1-4 6-4M10 13l3-2" /></svg>
      <svg width="18" height="14" viewBox="0 0 18 14" fill="none" stroke="#fff"><path d="M1 5v4h3l4 4V1L4 5zM10 5q2 2 0 4M12.500 3q3 4 0 8M15 1q4 6 0 12" /></svg>
      <svg width="23" height="13" viewBox="0 0 23 13" fill="none" stroke="#fff"><path d="M.5.500h22v12H.5z" /><path d="M3 3.500h17M3 6.500h17" stroke-dasharray="2 1" /><path d="M5 9.500h13" /></svg>
      <span>中</span>
      {@render icon('sogou', 17)}
      <time><span>11:49</span><span>2018/6/10</span></time>
      <svg width="17" height="17" viewBox="0 0 17 17" fill="none" stroke="#fff" stroke-width="1.200"><path d="M1 1h15v11h-5l-2.500 3L6 12H1z" /></svg>
    </div>
  </div>

  <div class="ime">
    <svg class="logo" width="29" height="30" viewBox="0 0 16 16">{@html icons.sogou}</svg>
    <b>中</b>
    <svg width="14" height="14" fill="#1f73c8"><circle cx="4" cy="4" r="1.800" fill="none" stroke="#1f73c8" /><path d="M8 6h4q1 4-3 6 1-2 0-3H8z" /></svg>
    <svg width="16" height="16" fill="none" stroke="#1f73c8" stroke-width="1.500"><circle cx="8" cy="8" r="7" /><path d="M4.500 9q3.500 4.500 7 0M5.500 5v2M10.500 5v2" /></svg>
    <svg width="12" height="16" fill="#1f73c8" stroke="#1f73c8"><rect x="4" y="1" width="4" height="8" rx="2" /><path d="M1.500 6q0 5 4.500 5t4.500-5M6 11v4" fill="none" stroke-width="1.500" /></svg>
    <svg width="16" height="12" fill="none" stroke="#1f73c8" stroke-width="1.500"><path d="M1 1h14v10H1z" /><path d="M3 4h10M3 6.500h10" stroke-dasharray="2 1" /><path d="M4 9h8" /></svg>
    <svg width="17" height="16" fill="#aab8cc"><circle cx="6" cy="4" r="3" /><path d="M0 14q0-6 6-6t6 3H6v3z" /><path d="M7 12h3v3H7zM12 10v3h4v-3" stroke="#8a9bb5" fill="none" /></svg>
    <svg width="14" height="14" fill="#1f73c8"><path d="M4 1q3 2 6 0l4 3-2 3-2-1v8H4V6L2 7 0 4z" /></svg>
    <svg width="15" height="15" fill="none" stroke="#1f73c8" stroke-width="3"><path d="M2 13l6-6" /><path d="M12 1q-5-1-5 4 3 5 7 0l-3 0z" stroke-width="2" /></svg>
  </div>

  <div class="ball">60</div>
  <div class="netpill">
    <svg width="38" height="38" viewBox="0 0 38 38" fill="none" stroke="#fff" stroke-width="2.800" stroke-linecap="round"><circle cx="19" cy="19" r="19" fill="#27cc72" stroke="none" /><path d="M6 14q13-11 26 0M10 19q9-8 18 0M14 24q5-4 10 0" /><circle cx="19" cy="28" r="1" /></svg>
    <div>
      <p><svg width="10" height="12" fill="none" stroke-width="2"><path d="M4 1v10L1 8" stroke="#27b860" /><path d="M7 12V1l3 4" stroke="#f08030" /></svg>0.00K/s</p>
      <p><svg width="10" height="12" fill="none" stroke="#16b865" stroke-width="1.500"><path d="M1 3h7v8H1z" /><path d="M1 7h7v4H1z" fill="#16b865" /><path d="M1 1h3" /></svg>0</p>
    </div>
  </div>
</div>

<style>
  :global(body) {
    margin: 0;
  }

  .window {
    display: flex;
    flex-direction: column;
    min-height: 100vh;
    position: relative;
    overflow: hidden;
    background: #f0f0f0;
    color: #000;
    font-family: 'Open Sans', 'Noto Sans CJK SC', sans-serif;
    font-size: 12px;
    line-height: 16px;
  }

  button,
  input,
  select {
    font: inherit;
    color: inherit;
    margin: 0;
    padding: 0;
    border: 0;
    background: none;
  }

  button,
  span {
    white-space: nowrap;
  }

  svg {
    flex: none;
    display: block;
  }

  h1,
  h2,
  p,
  ul {
    margin: 0;
    padding: 0;
    font-size: 12px;
    font-weight: normal;
  }

  .title {
    display: flex;
    align-items: center;
    height: 23px;
    padding-left: 2px;
    gap: 4px;
    background: #fff;
  }

  .title h1 {
    flex: 1;
    font-family: Inter, 'Noto Sans CJK SC', sans-serif;
  }

  .controls {
    display: flex;
  }

  .controls button {
    width: 46px;
    display: flex;
    justify-content: center;
  }

  .menubar {
    display: flex;
    height: 30px;
  }

  .menus {
    display: flex;
    align-items: center;
    flex: none;
    min-width: 932px;
    padding-left: 7px;
    gap: 11px;
    box-sizing: border-box;
  }

  .with-icon {
    display: flex;
    gap: 4px;
    margin-left: 10px;
  }

  .group {
    display: flex;
    align-items: center;
    box-sizing: border-box;
    padding: 0 2px;
    border-radius: 3px;
    background: linear-gradient(#fcfcfc, #f0f0f0);
  }

  .grow {
    flex: 1;
  }

  .account {
    flex: 1;
    gap: 10px;
    margin-left: 5px;
    padding-left: 29px;
  }

  .account a {
    flex: 1;
    color: #00686b;
    text-decoration: none;
    white-space: nowrap;
  }

  .user {
    display: flex;
    align-items: center;
  }

  .bar {
    display: flex;
    height: 28px;
    padding-bottom: 3px;
    gap: 3px;
  }

  .file {
    width: 150px;
  }

  .calc {
    width: 547px;
  }

  .more {
    align-self: flex-start;
    margin: 5px 0 0 auto;
  }

  .account .more {
    margin: 5px 2px 0 25px;
  }

  .tool {
    display: flex;
    align-items: center;
    height: 23px;
    gap: 4px;
    padding: 0 3px 0 2px;
    border: 1px solid transparent;
    box-sizing: border-box;
    flex: none;
  }

  .tool:disabled {
    color: #8c8c8c;
  }

  .tool.on {
    background: #deebf7;
    border-color: #0078d7;
  }

  .tool.strong {
    background: #b3d7f3;
  }

  .tool.plain {
    background: #fff;
  }

  .caret {
    width: 5px;
    height: 3px;
    margin: 0 1px 0 2px;
    background: #000;
    clip-path: polygon(0 0, 100% 0, 50% 100%);
  }

  .user .caret {
    margin-left: 8px;
  }

  .caret.tight {
    margin: 0 -1px 0 0;
  }

  .tool:disabled .caret {
    background: #888;
  }

  .sep {
    flex: none;
    width: 1px;
    height: 16px;
    margin: 0 2px 0 3px;
    background: #b9b9b9;
  }

  .handle {
    flex: none;
    width: 2px;
    height: 16px;
    margin-right: 2px;
    background: repeating-linear-gradient(#b0b0b0 0 2px, transparent 2px 4px);
  }

  .body {
    display: flex;
    flex: 1;
  }

  aside {
    display: flex;
    flex-direction: column;
    flex: none;
    width: 255px;
    font-family: 'Liberation Serif', 'Noto Sans CJK SC', serif;
  }

  .dock-title {
    display: flex;
    align-items: center;
    height: 16px;
    padding-right: 5px;
    gap: 10px;
    margin-bottom: 1px;
    background: #0055e5;
    color: #fff;
  }

  .dock-title h2 {
    flex: 1;
    font-size: 13px;
  }

  .nav {
    height: 22px;
    width: 254px;
    box-sizing: border-box;
    border: 1px solid #a0a0a0;
    border-top-color: #fff;
    background: #f0f0f0;
  }

  .expand {
    display: flex;
    align-items: center;
    gap: 6px;
    height: 28px;
    padding-left: 6px;
    background: linear-gradient(#fff, #f0f0f0);
  }

  .tree {
    display: flex;
    flex: 1 1 0;
    min-height: 0;
    margin: 0 2px 2px 1px;
    border: 1px solid #828790;
    background: #fff;
    overflow: hidden;
    padding-right: 2px;
  }

  .tree ul {
    flex: 1;
    list-style: none;
    overflow: hidden;
  }

  .tree li {
    display: flex;
    align-items: center;
    height: 16px;
    box-sizing: border-box;
  }

  .level1 {
    padding-left: 7px;
  }

  .level1 .arrow {
    margin-right: 3px;
  }

  .twig {
    width: 3px;
    height: 1px;
    background: repeating-linear-gradient(90deg, #888 0 1px, transparent 1px 2px);
  }

  .level1 .leaf {
    padding: 0 5px;
  }

  .level2 {
    padding-left: 40px;
    background:
      repeating-linear-gradient(#888 0 1px, transparent 1px 2px) 13px 0 / 1px 16px no-repeat,
      repeating-linear-gradient(#888 0 1px, transparent 1px 2px) 32px 0 / 1px 16px no-repeat,
      repeating-linear-gradient(90deg, #888 0 1px, transparent 1px 2px) 32px 8px / 10px 1px no-repeat;
  }

  .level2.last {
    background:
      repeating-linear-gradient(#888 0 1px, transparent 1px 2px) 13px 0 / 1px 16px no-repeat,
      repeating-linear-gradient(#888 0 1px, transparent 1px 2px) 32px 0 / 1px 8px no-repeat,
      repeating-linear-gradient(90deg, #888 0 1px, transparent 1px 2px) 32px 8px / 10px 1px no-repeat;
  }

  .leaf {
    display: flex;
    align-items: center;
    gap: 4px;
    height: 16px;
    padding: 0 3px;
  }

  .selected {
    background: #d9d9d9;
  }

  .scroll {
    display: flex;
    flex-direction: column;
    align-items: center;
    width: 15px;
    padding: 6px 0;
    gap: 5px;
    background: #f0f0f0;
  }

  .above {
    flex: 94;
  }

  .thumb {
    flex: 321;
    width: 15px;
    background: #cdcdcd;
  }

  .below {
    flex: 28;
  }

  main {
    display: flex;
    flex-direction: column;
    flex: 1;
    min-width: 0;
    padding-left: 4px;
  }

  .row {
    display: flex;
    flex: none;
    height: 28px;
    padding-bottom: 2px;
    box-sizing: border-box;
  }

  .row .group {
    padding-left: 4px;
  }

  .row .parts {
    padding-left: 6px;
  }

  .row .axis {
    margin-left: 70px;
  }

  .tail {
    width: 32px;
    margin-left: 2px;
  }

  .combo {
    display: flex;
    position: relative;
    height: 23px;
    margin-right: 3px;
    background: #fff;
  }

  .combo::after {
    content: '';
    position: absolute;
    right: 0;
    top: 0;
    width: 11px;
    height: 23px;
    background: #f5f5f5;
    pointer-events: none;
  }

  .combo::before {
    content: '';
    position: absolute;
    z-index: 1;
    right: 3px;
    top: 10px;
    border: 3px solid transparent;
    border-top-color: #000;
    border-bottom: 0;
    pointer-events: none;
  }

  .combo select {
    appearance: none;
    width: 100%;
    padding-left: 2px;
  }

  .tiny {
    width: 54px;
  }

  .short {
    width: 57px;
  }

  .long {
    width: 69px;
  }

  .canvas {
    flex: 1 1 0;
    min-height: 0;
    width: calc(100% - 1px);
    background: #000;
  }

  .canvas text {
    font: bold 14px 'Liberation Mono', monospace;
    fill: #ccc;
  }

  .snap {
    display: flex;
    flex: none;
    height: 31px;
    padding: 2px 0 3px 212px;
    box-sizing: border-box;
  }

  .offset {
    margin-left: 2px;
  }

  .snap .handle {
    margin-left: 1px;
  }

  .dim {
    color: #777;
    margin-right: 3px;
  }

  .unit {
    margin: 0 4px 0 2px;
  }

  .spin {
    display: flex;
    align-items: center;
    height: 23px;
    box-sizing: border-box;
    padding-right: 4px;
    border: 1px solid #7a7a7a;
    color: #777;
  }

  .spin input {
    flex: 1;
    min-width: 0;
    padding-right: 12px;
    text-align: right;
  }

  .narrow {
    width: 58px;
  }

  .wide {
    width: 68px;
    margin-right: 3px;
  }

  .snap label {
    display: flex;
    align-items: center;
    gap: 8px;
    margin: 0 5px 0 1px;
  }

  .snap input[type='checkbox'] {
    appearance: none;
    width: 11px;
    height: 11px;
    border: 1px solid #aaa;
    background: #f5f5f5;
  }

  .status {
    display: flex;
    gap: 2px;
    height: 22px;
    box-sizing: border-box;
    padding-top: 1px;
    border-top: 1px solid #fff;
    font-family: 'Liberation Serif', 'Noto Sans CJK SC', serif;
    line-height: 18px;
  }

  .status span {
    box-sizing: border-box;
    padding-left: 1px;
    border: 1px solid #d5d5d5;
    background: linear-gradient(#fdfdfd, #f0f0f0);
  }

  .coords {
    width: 148px;
  }

  .height {
    width: 78px;
  }

  .base {
    width: 98px;
  }

  .count {
    width: 48px;
  }

  .fps {
    width: 70px;
  }

  .taskbar {
    display: flex;
    height: 40px;
    background: #010b10;
    color: #fff;
  }

  .start {
    width: 48px;
    display: flex;
    align-items: center;
    justify-content: center;
    background: #000;
  }

  .search {
    display: flex;
    align-items: center;
    width: 344px;
    box-sizing: border-box;
    padding: 0 14px 0 9px;
    gap: 5px;
    background: #333;
  }

  .search input {
    flex: 1;
    font-size: 14px;
  }

  .search input::placeholder {
    color: #9a9a9a;
    opacity: 1;
  }

  .apps {
    display: flex;
    gap: 2px;
  }

  .pinned {
    margin-left: 7px;
    gap: 1px;
  }

  .apps button {
    display: flex;
    align-items: center;
    justify-content: center;
    position: relative;
    width: 48px;
    border-bottom: 3px solid transparent;
    border-top: 3px solid transparent;
    box-sizing: border-box;
  }

  .apps .running {
    border-bottom-color: #76b9ed;
  }

  .apps .active {
    background: #333c40;
  }

  .white {
    color: #eee;
  }

  .sky {
    color: #3aa5ea;
  }

  .orbit {
    position: absolute;
    left: 12px;
    top: 5px;
  }

  .tray {
    display: flex;
    align-items: center;
    flex: 1;
    justify-content: flex-end;
    gap: 12px;
    padding-right: 26px;
  }

  .tray svg {
    margin-right: -2px;
  }

  .tray time {
    display: flex;
    flex-direction: column;
    align-items: center;
    margin: 0 8px 0 7px;
    line-height: 19px;
  }

  .ime {
    display: flex;
    position: absolute;
    align-items: center;
    left: 722px;
    top: 34px;
    width: 205px;
    height: 23px;
    box-sizing: border-box;
    padding: 0 5px 0 31px;
    justify-content: space-between;
    border: 1px solid #b5cbe2;
    background: #fff;
    color: #1f73c8;
    font-size: 14px;
  }

  .logo {
    position: absolute;
    left: -3px;
    top: -7px;
  }

  .ball {
    position: absolute;
    left: 1131px;
    top: -30px;
    width: 44px;
    height: 44px;
    border: 2px solid #ddd;
    border-radius: 50%;
    background: #3fbf55;
    box-shadow: 0 1px 3px #888;
    color: #fff;
    font-weight: bold;
    line-height: 71px;
    text-align: center;
  }

  .netpill {
    display: flex;
    align-items: center;
    position: absolute;
    left: 1048px;
    top: 25px;
    width: 120px;
    height: 50px;
    box-sizing: border-box;
    padding-left: 6px;
    gap: 6px;
    border-radius: 25px;
    background: #fff;
    box-shadow: 0 1px 5px #777;
    color: #666;
  }

  .netpill p {
    display: flex;
    align-items: center;
    gap: 5px;
    height: 20px;
    font-size: 11px;
  }
</style>
